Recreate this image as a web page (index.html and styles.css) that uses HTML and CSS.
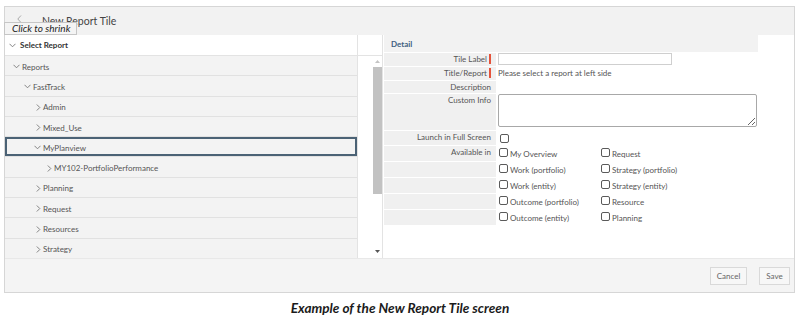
FILE: index.html
```html
<!DOCTYPE html>
<html>
<head>
<meta charset="utf-8">
<link rel="stylesheet" href="styles.css">
</head>
<body>
<div class="frame">
  <div class="topbar">
    <svg class="back" width="5" height="8" viewBox="0 0 5 8"><polyline points="4,0.5 0.8,4 4,7.5" fill="none" stroke="#aaa" stroke-width="1"/></svg>
    <span class="title">New Report Tile</span>
  </div>
  <div class="tip">Click to shrink</div>
  <div class="main">
    <div class="left">
      <div class="tree">
        <div class="tree-head">
          <svg class="chev-d" width="7" height="5" viewBox="0 0 7 5"><polyline points="0.5,0.8 3.5,3.8 6.5,0.8" fill="none" stroke="#777" stroke-width="0.9"/></svg>
          <span>Select Report</span>
        </div>
        <div class="row l0"><span class="slot"><svg class="chev-d" width="7" height="5" viewBox="0 0 7 5"><polyline points="0.5,0.8 3.5,3.8 6.5,0.8" fill="none" stroke="#777" stroke-width="0.9"/></svg></span>Reports</div>
        <div class="row l1"><span class="slot"><svg class="chev-d" width="7" height="5" viewBox="0 0 7 5"><polyline points="0.5,0.8 3.5,3.8 6.5,0.8" fill="none" stroke="#777" stroke-width="0.9"/></svg></span>FastTrack</div>
        <div class="row l2"><span class="slot"><svg class="chev-r" width="5" height="7" viewBox="0 0 5 7"><polyline points="0.8,0.5 3.8,3.5 0.8,6.5" fill="none" stroke="#777" stroke-width="0.9"/></svg></span>Admin</div>
        <div class="row l2"><span class="slot"><svg class="chev-r" width="5" height="7" viewBox="0 0 5 7"><polyline points="0.8,0.5 3.8,3.5 0.8,6.5" fill="none" stroke="#777" stroke-width="0.9"/></svg></span>Mixed_Use</div>
        <div class="row l2 sel"><span class="slot"><svg class="chev-d" width="7" height="5" viewBox="0 0 7 5"><polyline points="0.5,0.8 3.5,3.8 6.5,0.8" fill="none" stroke="#777" stroke-width="0.9"/></svg></span>MyPlanview</div>
        <div class="row l3"><span class="slot"><svg class="chev-r" width="5" height="7" viewBox="0 0 5 7"><polyline points="0.8,0.5 3.8,3.5 0.8,6.5" fill="none" stroke="#777" stroke-width="0.9"/></svg></span>MY102-PortfolioPerformance</div>
        <div class="row l2"><span class="slot"><svg class="chev-r" width="5" height="7" viewBox="0 0 5 7"><polyline points="0.8,0.5 3.8,3.5 0.8,6.5" fill="none" stroke="#777" stroke-width="0.9"/></svg></span>Planning</div>
        <div class="row l2"><span class="slot"><svg class="chev-r" width="5" height="7" viewBox="0 0 5 7"><polyline points="0.8,0.5 3.8,3.5 0.8,6.5" fill="none" stroke="#777" stroke-width="0.9"/></svg></span>Request</div>
        <div class="row l2"><span class="slot"><svg class="chev-r" width="5" height="7" viewBox="0 0 5 7"><polyline points="0.8,0.5 3.8,3.5 0.8,6.5" fill="none" stroke="#777" stroke-width="0.9"/></svg></span>Resources</div>
        <div class="row l2"><span class="slot"><svg class="chev-r" width="5" height="7" viewBox="0 0 5 7"><polyline points="0.8,0.5 3.8,3.5 0.8,6.5" fill="none" stroke="#777" stroke-width="0.9"/></svg></span>Strategy</div>
      </div>
      <div class="scrollcol">
        <div class="scroll-head"></div>
        <div class="scroll-body">
          <div class="track">
            <svg class="arr" width="7" height="5" viewBox="0 0 7 5"><polygon points="3.5,1 6,4 1,4" fill="#c4c4c4"/></svg>
            <div class="thumb"></div>
            <div class="spacer"></div>
            <svg class="arr" width="7" height="5" viewBox="0 0 7 5"><polygon points="1,1 6,1 3.5,4" fill="#555"/></svg>
          </div>
        </div>
      </div>
    </div>
    <div class="right">
      <div class="detail-head">Detail</div>
      <div class="form">
        <div class="lab r13">Tile Label<i class="req"></i></div>
        <div class="val r13"><div class="input"></div></div>

        <div class="lab r13">Title/Report<i class="req"></i></div>
        <div class="val r13 txt">Please select a report at left side</div>

        <div class="lab r12">Description</div>
        <div class="val r12"></div>

        <div class="lab r36">Custom Info</div>
        <div class="val r36"><textarea class="ta"></textarea></div>

        <div class="lab r14">Launch in Full Screen</div>
        <div class="val r14 mid"><span class="cb"></span></div>

        <div class="lab r15">Available in</div>
        <div class="val r15 opts"><label class="opt"><span class="cb"></span>My Overview</label><label class="opt"><span class="cb"></span>Request</label></div>

        <div class="lab r15"></div>
        <div class="val r15 opts"><label class="opt"><span class="cb"></span>Work (portfolio)</label><label class="opt"><span class="cb"></span>Strategy (portfolio)</label></div>

        <div class="lab r15"></div>
        <div class="val r15 opts"><label class="opt"><span class="cb"></span>Work (entity)</label><label class="opt"><span class="cb"></span>Strategy (entity)</label></div>

        <div class="lab r15"></div>
        <div class="val r15 opts"><label class="opt"><span class="cb"></span>Outcome (portfolio)</label><label class="opt"><span class="cb"></span>Resource</label></div>

        <div class="lab r15"></div>
        <div class="val r15 opts"><label class="opt"><span class="cb"></span>Outcome (entity)</label><label class="opt"><span class="cb"></span>Planning</label></div>
      </div>
    </div>
  </div>
  <div class="footer">
    <span class="btn cancel">Cancel</span>
    <span class="btn save">Save</span>
  </div>
</div>
<p class="caption">Example of the New Report Tile screen</p>
</body>
</html>
```

FILE: styles.css
```css
* { box-sizing: border-box; }
body {
  margin: 0;
  background: #fff;
  font-family: Lato, "Liberation Sans", sans-serif;
  font-size: 8px;
  color: #555;
}
.frame {
  position: relative;
  margin: 6px 5px 0 4px;
  width: 791px;
  border: 1px solid #d6d6d6;
  background: #fff;
}
.topbar {
  height: 28px;
  background: #f2f2f2;
  display: flex;
  align-items: center;
  padding-left: 12px;
}
.back { margin-right: 20px; margin-top: -4px; }
.title {
  font-size: 10.5px;
  color: #444;
  margin-top: -1px;
}
.tip {
  position: absolute;
  left: -1px;
  top: 15px;
  height: 13px;
  padding: 0 6px 0 7px;
  background: #f4f4f4;
  border: 1px solid #c6c6c6;
  font-style: italic;
  font-size: 10px;
  line-height: 11px;
  color: #222;
}
.main {
  display: flex;
  height: 223px;
  overflow: hidden;
}
.left {
  display: flex;
  width: 378px;
  flex: none;
}
.tree {
  width: 352px;
  flex: none;
}
.tree-head {
  height: 21px;
  background: #fff;
  border-bottom: 1px solid #e3e3e3;
  display: flex;
  align-items: center;
  padding-left: 4px;
  font-weight: bold;
  color: #333;
}
.tree-head .chev-d { margin-right: 4px; }
.row {
  height: 20.3px;
  background: #f3f3f3;
  border-bottom: 1px solid #e1e1e1;
  display: flex;
  align-items: center;
  padding-top: 2px;
  color: #555;
}
.row.l0 { padding-left: 8px; }
.row.l1 { padding-left: 19px; }
.row.l2 { padding-left: 29px; }
.row.l3 { padding-left: 40px; }
.row.sel { box-shadow: inset 0 0 0 2px #4b6275; }
.slot {
  width: 9px;
  flex: none;
  display: flex;
  align-items: center;
}
.slot .chev-r { margin-left: 2px; }
.scrollcol {
  width: 26px;
  flex: none;
  border-left: 1px solid #e3e3e3;
  border-right: 1px solid #e3e3e3;
  display: flex;
  flex-direction: column;
}
.scroll-head {
  height: 21px;
  border-bottom: 1px solid #e3e3e3;
  flex: none;
}
.scroll-body {
  flex: 1;
  display: flex;
  justify-content: flex-end;
  padding: 3px 0 0 0;
}
.track {
  width: 10px;
  display: flex;
  flex-direction: column;
  align-items: center;
}
.arr { flex: none; }
.thumb {
  width: 9px;
  height: 127px;
  margin-top: 3px;
  background: #c2c2c2;
  flex: none;
}
.spacer { flex: 1; }
.track .arr:last-child { margin-bottom: 4px; }
.right {
  flex: 1;
  padding-left: 1px;
  background: #fff;
}
.detail-head {
  width: 374px;
  height: 17px;
  background: #f2f2f2;
  display: flex;
  align-items: center;
  padding-left: 7px;
  font-weight: bold;
  color: #3d5f80;
  margin-bottom: 1px;
}
.form {
  display: grid;
  grid-template-columns: 112px 1fr;
  row-gap: 1px;
}
.lab {
  background: #f0f0f0;
  text-align: right;
  padding: 1px 5px 0 0;
  line-height: 10px;
  color: #555;
}
.req {
  display: inline-block;
  width: 2px;
  height: 10px;
  background: #e5533b;
  margin-left: 2px;
  vertical-align: top;
}
.r12 { height: 12px; }
.r13 { height: 13px; }
.r14 { height: 14px; }
.r15 { height: 15px; }
.r36 { height: 36px; }
.val {
  padding-left: 2px;
  line-height: 10px;
}
.val.txt { padding-top: 1px; }
.input {
  width: 174px;
  height: 12px;
  border: 1px solid #cfcfcf;
  background: #fff;
}
.ta {
  display: block;
  width: 259px;
  height: 33px;
  border: 1px solid #a8a8a8;
  border-radius: 2px;
  margin: 0;
  padding: 0;
  background: #fff;
  font-size: 8px;
}
.mid { display: flex; align-items: center; }
.cb {
  display: inline-block;
  width: 9px;
  height: 9px;
  border: 1px solid #5a5a5a;
  border-radius: 2px;
  background: #fff;
  margin-left: 2px;
  flex: none;
}
.opts {
  display: flex;
  align-items: center;
}
.opt {
  display: flex;
  align-items: center;
  color: #555;
}
.opt:first-child { width: 102px; }
.opt .cb { margin-left: 1px; margin-right: 2px; margin-top: -2px; }
.footer {
  height: 34px;
  background: #f4f4f4;
  border-top: 1px solid #e8e8e8;
  display: flex;
  justify-content: flex-end;
  align-items: center;
  gap: 12px;
  padding-right: 4px;
  padding-top: 1px;
}
.btn {
  height: 18px;
  display: flex;
  align-items: center;
  justify-content: center;
  border: 1px solid #d9d9d9;
  background: #f7f7f7;
  color: #666;
  font-size: 8px;
}
.cancel { width: 37px; }
.save { width: 31px; }
.caption {
  margin: 8px 0 0 0;
  text-align: center;
  font-style: italic;
  font-weight: bold;
  font-size: 13.6px;
  line-height: 15px;
  color: #1b1b1b;
}
```
